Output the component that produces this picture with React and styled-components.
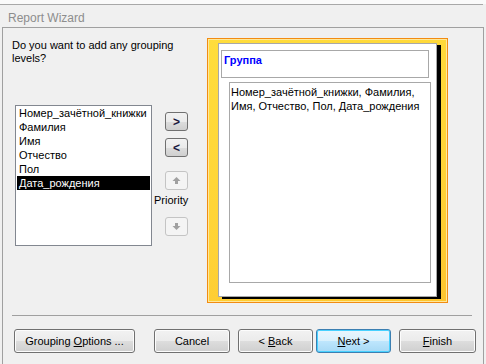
import React from 'react';
import styled, {createGlobalStyle} from 'styled-components';

const GlobalStyle = createGlobalStyle`
  html, body {
    margin: 0;
    padding: 0;
    background: #f0f0f0;
  }
  body {
    font-family: "Liberation Sans", Arial, sans-serif;
    font-size: 11px;
    color: #000;
  }
`;

const Screen = styled.div`
  width: 486px;
  height: 364px;
  overflow: hidden;
  background: #f0f0f0;
  border-top: 4px solid #fafafa;
  box-sizing: border-box;
`;

const TitleBar = styled.div`
  width: 483px;
  height: 23px;
  box-sizing: border-box;
  border-top: 1px solid #a8a8a8;
  padding: 3px 0 0 8px;
  display: flex;
  align-items: center;
  color: #8d8d8d;
  font-size: 12px;
`;

const Window = styled.div`
  margin-left: 2px;
  width: 482px;
  height: 337px;
  box-sizing: border-box;
  border: 1px solid #a0a0a0;
  border-bottom: none;
  display: flex;
  flex-direction: column;
`;

const Body = styled.div`
  height: 287px;
  display: flex;
`;

const LeftPane = styled.div`
  width: 204px;
  display: flex;
  flex-direction: column;
`;

const Question = styled.div`
  height: 77px;
  padding: 11px 0 0 9px;
  box-sizing: border-box;
  line-height: 13px;
`;

const PickerRow = styled.div`
  display: flex;
  padding-left: 12px;
`;

const FieldList = styled.div`
  width: 137px;
  height: 141px;
  box-sizing: border-box;
  border: 1px solid #828790;
  background: #fff;
  padding: 0 1px;
`;

const FieldItem = styled.div`
  height: 14px;
  line-height: 14px;
  padding-left: 2px;
  white-space: nowrap;
  background: ${p => (p.selected ? '#000' : 'transparent')};
  color: ${p => (p.selected ? '#fff' : '#000')};
`;

const Controls = styled.div`
  margin-left: 2px;
  padding-top: 7px;
  display: flex;
  flex-direction: column;
  align-items: flex-start;
`;

const MoveButton = styled.div`
  width: 23px;
  height: 19px;
  box-sizing: border-box;
  margin-left: 11px;
  margin-bottom: ${p => p.gap}px;
  border: 1px solid ${p => (p.disabled ? '#c4c4c4' : '#707070')};
  border-radius: 3px;
  background: ${p =>
    p.disabled
      ? '#f4f4f4'
      : 'linear-gradient(#f2f2f2 0%, #ebebeb 50%, #dddddd 51%, #cfcfcf 100%)'};
  display: flex;
  align-items: center;
  justify-content: center;
  font-weight: bold;
  font-size: 12px;
  color: #1a1a40;
`;

const PriorityLabel = styled.div`
  height: 13px;
  line-height: 13px;
  margin-bottom: 10px;
  color: #000;
`;

const Preview = styled.div`
  margin-top: 10px;
  width: 241px;
  height: 265px;
  box-sizing: border-box;
  border: 1px solid #f28c12;
  box-shadow: inset 0 0 0 1px #ffe89a;
  background: linear-gradient(160deg, #ffdd3c 0%, #ffd336 60%, #fdc52e 100%);
  padding: 4px 10px 0 10px;
`;

const Page = styled.div`
  width: 219px;
  height: 254px;
  box-sizing: border-box;
  border: 1px solid #a8a8a8;
  background: #fff;
  box-shadow: 4px 2px 0 #000;
  padding: 6px 0 0 2px;
`;

const GroupHeader = styled.div`
  width: 208px;
  height: 28px;
  box-sizing: border-box;
  border: 1px solid #a8a8a8;
  padding: 2px 0 0 2px;
  color: #0000ff;
  font-weight: bold;
  line-height: 14px;
`;

const DetailBox = styled.div`
  margin: 4px 0 0 8px;
  width: 202px;
  height: 201px;
  box-sizing: border-box;
  border: 1px solid #a8a8a8;
  padding: 2px 0 0 1px;
  line-height: 14px;
`;

const Separator = styled.div`
  margin-left: 9px;
  width: 460px;
  height: 1px;
  background: #a0a0a0;
`;

const Footer = styled.div`
  display: flex;
  padding: 13px 0 0 11px;
`;

const Button = styled.div`
  width: ${p => p.w}px;
  margin-left: ${p => p.ml || 0}px;
  height: 24px;
  box-sizing: border-box;
  border: 1px solid ${p => (p.focused ? '#3c7fb1' : '#707070')};
  border-radius: 3px;
  background: ${p =>
    p.focused
      ? 'linear-gradient(#eaf6fd 0%, #d9f0fc 50%, #bee6fd 51%, #a7d9f5 100%)'
      : 'linear-gradient(#f2f2f2 0%, #ebebeb 50%, #dddddd 51%, #cfcfcf 100%)'};
  box-shadow: ${p => (p.focused ? 'inset 0 0 0 1px #48d1ff' : 'inset 0 0 0 1px #fcfcfc')};
  display: flex;
  align-items: center;
  justify-content: center;
  font-size: 11px;
  color: #000;
  u {
    text-decoration: underline;
  }
`;

const ArrowIcon = ({down}) => (
  <svg width="9" height="9" viewBox="0 0 9 9">
    <g fill="#a0a0a0" transform={down ? 'rotate(180 4.5 4.5)' : undefined}>
      <polygon points="4.5,1 8.5,5 0.5,5" />
      <rect x="3" y="5" width="3" height="3" />
    </g>
  </svg>
);

const fields = [
  'Номер_зачётной_книжки',
  'Фамилия',
  'Имя',
  'Отчество',
  'Пол',
  'Дата_рождения',
];

export default function App() {
  return (
    <Screen>
      <GlobalStyle />
      <TitleBar>Report Wizard</TitleBar>
      <Window>
        <Body>
          <LeftPane>
            <Question>
              Do you want to add any grouping
              <br />
              levels?
            </Question>
            <PickerRow>
              <FieldList>
                {fields.map(f => (
                  <FieldItem key={f} selected={f === 'Дата_рождения'}>
                    {f}
                  </FieldItem>
                ))}
              </FieldList>
              <Controls>
                <MoveButton gap={7}>&gt;</MoveButton>
                <MoveButton gap={14}>&lt;</MoveButton>
                <MoveButton disabled gap={4}>
                  <ArrowIcon />
                </MoveButton>
                <PriorityLabel>Priority</PriorityLabel>
                <MoveButton disabled gap={0}>
                  <ArrowIcon down />
                </MoveButton>
              </Controls>
            </PickerRow>
          </LeftPane>
          <Preview>
            <Page>
              <GroupHeader>Группа</GroupHeader>
              <DetailBox>
                Номер_зачётной_книжки, Фамилия,
                <br />
                Имя, Отчество, Пол, Дата_рождения
              </DetailBox>
            </Page>
          </Preview>
        </Body>
        <Separator />
        <Footer>
          <Button w={121}>
            <span>
              Grouping <u>O</u>ptions ...
            </span>
          </Button>
          <Button w={76} ml={19}>
            Cancel
          </Button>
          <Button w={75} ml={8}>
            <span>
              &lt; <u>B</u>ack
            </span>
          </Button>
          <Button w={75} ml={3} focused>
            <span>
              <u>N</u>ext &gt;
            </span>
          </Button>
          <Button w={77} ml={8}>
            <span>
              <u>F</u>inish
            </span>
          </Button>
        </Footer>
      </Window>
    </Screen>
  );
}
